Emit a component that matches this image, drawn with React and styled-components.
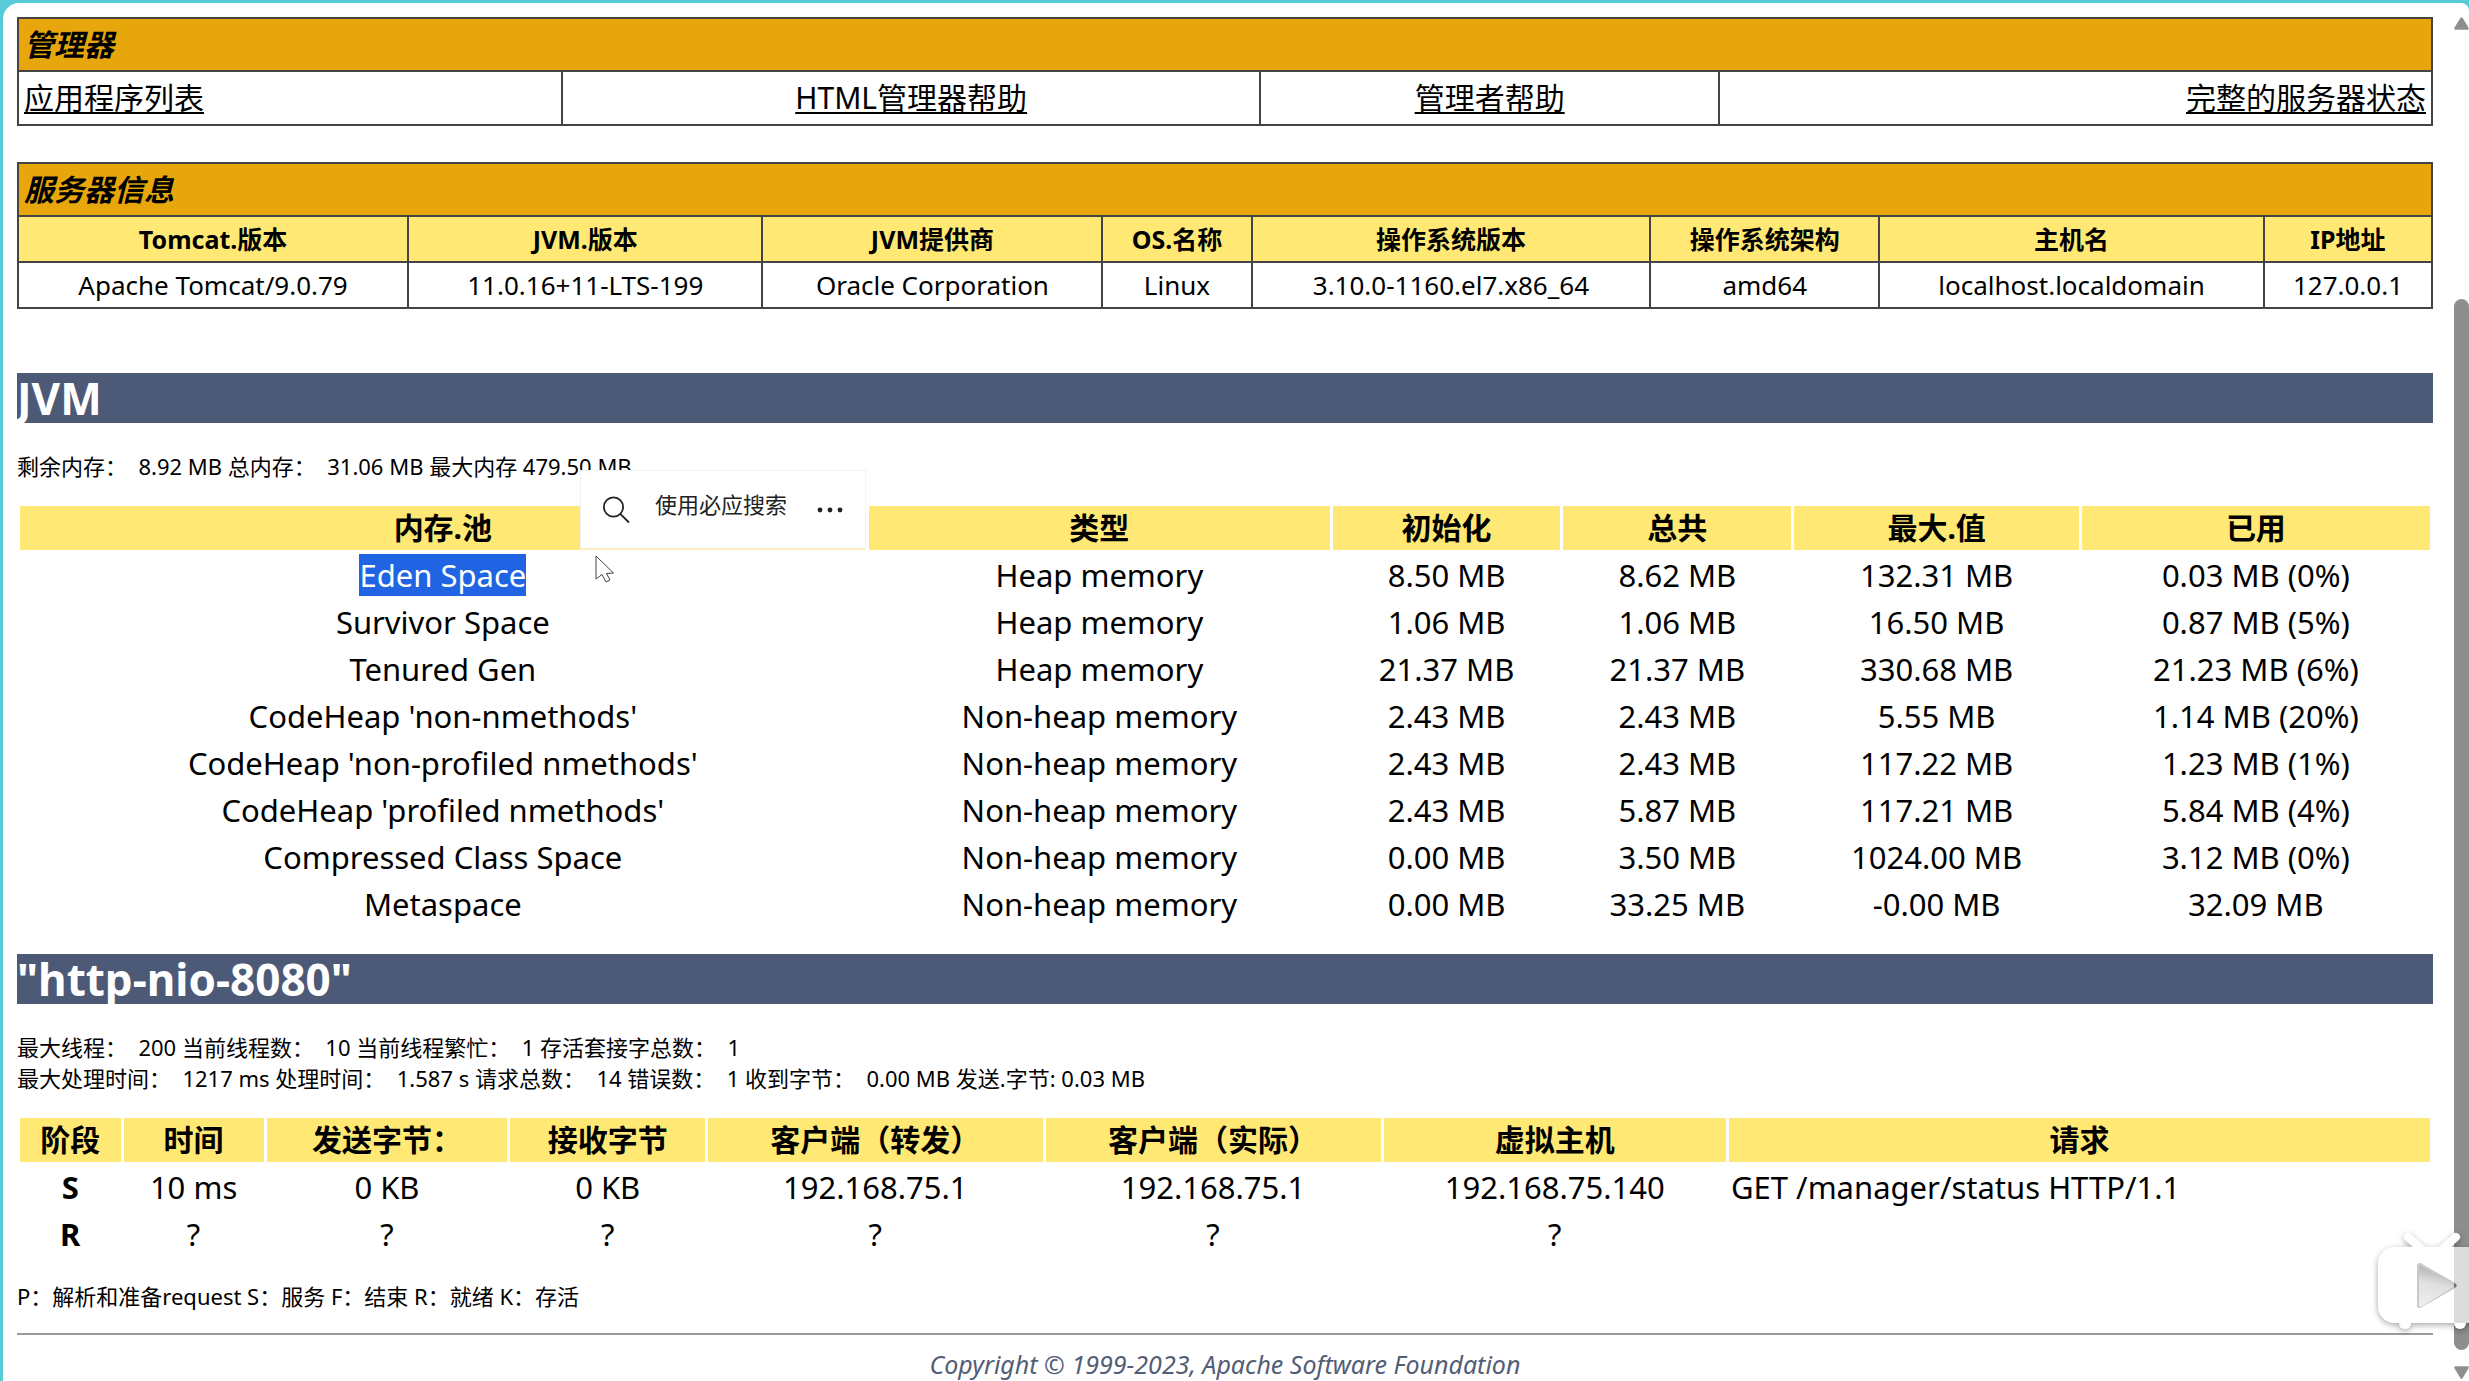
import React from 'react';
import styled, { createGlobalStyle } from 'styled-components'

const GlobalStyle = createGlobalStyle`
  * {
    box-sizing: border-box;
  }
  body {
    margin: 0;
    background: #58cbd9;
    color: #000;
    font-family: "Noto Sans", "Noto Sans CJK SC", sans-serif;
  }
`;

const Frame = styled.div`
    position: relative;
    display: flex;
    min-height: 100vh;
    border-top: 3px solid #58cbd9;
    border-left: 3px solid #58cbd9;
    overflow: hidden;
`;

const Page = styled.main`
    flex: 1;
    min-width: 0;
    background: white;
    border-top-left-radius: 16px;
    padding: 14px 21px 0 14px;
`;

const BoxTable = styled.table`
    width: 100%;
    table-layout: fixed;
    border-collapse: collapse;
    margin-bottom: ${props => props.$gap}px;
    th, td {
      border: 2px solid #444;
      padding: 0 5px;
    }
`;

const Col = styled.col`
    width: ${props => props.$w}%;
`;

const TitleCell = styled.th`
    height: 53px;
    background: #e7a70c;
    font-size: 30px;
    line-height: 40px;
    font-style: italic;
    text-align: left;
`;

const LinkCell = styled.td`
    height: 54px;
    font-size: 30px;
    line-height: 40px;
    text-align: ${props => props.$align || 'center'};
`;

const PageLink = styled.a`
    color: black;
    text-decoration: underline;
    text-decoration-thickness: 2px;
    text-underline-offset: 3px;
`;

const InfoHead = styled.th`
    height: 46px;
    background: #ffe974;
    font-size: 25px;
    line-height: 36px;
`;

const InfoCell = styled.td`
    height: 46px;
    font-size: 26px;
    line-height: 36px;
    text-align: center;
`;

const Banner = styled.h1`
    margin: 0 0 28px;
    background: #4c5a77;
    color: white;
    font-size: 44px;
    line-height: 50px;
    font-weight: bold;
`;

const Info = styled.p`
    margin: 0;
    font-size: 22px;
    line-height: 31px;
    white-space: pre-wrap;
`;

const DataTable = styled.table`
    width: 100%;
    table-layout: fixed;
    border-collapse: separate;
    border-spacing: 3px;
    margin: 21px 0 ${props => props.$gap}px;
    font-size: 31px;
    line-height: 40px;
    th, td {
      height: 44px;
      padding: 0 2px;
      text-align: center;
      white-space: nowrap;
    }
    td:nth-child(8) {
      text-align: left;
    }
`;

const DataHead = styled.th`
    background: #ffe974;
    font-size: 30px;
`;

const Selected = styled.span`
    background: #2164e3;
    color: white;
`;

const PoolWrap = styled.div`
    position: relative;
`;

const Popup = styled.div`
    position: absolute;
    top: -33px;
    left: 563px;
    width: 286px;
    height: 80px;
    display: flex;
    align-items: center;
    gap: 30px;
    padding: 0 20px;
    background: white;
    border: 1px solid #f3f3f3;
    border-bottom: 2px solid #fdeec0;
`;

const PopupButton = styled.button`
    display: flex;
    align-items: center;
    gap: 24px;
    padding: 0;
    border: 0;
    background: none;
    color: #222;
    font-family: inherit;
    font-size: 22px;
    line-height: 30px;
    white-space: nowrap;
`;

const PopupLabel = styled.span`
    padding-bottom: 12px;
`;

const Pointer = styled.svg`
    position: absolute;
    top: 52px;
    left: 578px;
`;

const Rule = styled.hr`
    margin: 21px 0 15px;
    border: 0;
    border-top: 2px solid #999b9d;
`;

const Copyright = styled.footer`
    color: #525d76;
    font-size: 25px;
    line-height: 28px;
    font-style: italic;
    text-align: center;
`;

const ScrollBar = styled.div`
    display: flex;
    flex-direction: column;
    width: 15px;
    background: white;
    border-top-right-radius: 8px;
    padding: 14px 0 2px;
`;

const Thumb = styled.div`
    flex: 1;
    margin: 269px 0 16px;
    border-radius: 8px;
    background: #8d8f8d;
`;

const PlayerBadge = styled.svg`
    position: absolute;
    right: 0;
    bottom: 46px;
`;

const POOL_HEADS = ['内存.池', '类型', '初始化', '总共', '最大.值', '已用'];
const POOLS = [
    ['Eden Space', 'Heap memory', '8.50 MB', '8.62 MB', '132.31 MB', '0.03 MB (0%)'],
    ['Survivor Space', 'Heap memory', '1.06 MB', '1.06 MB', '16.50 MB', '0.87 MB (5%)'],
    ['Tenured Gen', 'Heap memory', '21.37 MB', '21.37 MB', '330.68 MB', '21.23 MB (6%)'],
    ["CodeHeap 'non-nmethods'", 'Non-heap memory', '2.43 MB', '2.43 MB', '5.55 MB', '1.14 MB (20%)'],
    ["CodeHeap 'non-profiled nmethods'", 'Non-heap memory', '2.43 MB', '2.43 MB', '117.22 MB', '1.23 MB (1%)'],
    ["CodeHeap 'profiled nmethods'", 'Non-heap memory', '2.43 MB', '5.87 MB', '117.21 MB', '5.84 MB (4%)'],
    ['Compressed Class Space', 'Non-heap memory', '0.00 MB', '3.50 MB', '1024.00 MB', '3.12 MB (0%)'],
    ['Metaspace', 'Non-heap memory', '0.00 MB', '33.25 MB', '-0.00 MB', '32.09 MB'],
];

const SERVER = [
    ['Tomcat.版本', 'Apache Tomcat/9.0.79'],
    ['JVM.版本', '11.0.16+11-LTS-199'],
    ['JVM提供商', 'Oracle Corporation'],
    ['OS.名称', 'Linux'],
    ['操作系统版本', '3.10.0-1160.el7.x86_64'],
    ['操作系统架构', 'amd64'],
    ['主机名', 'localhost.localdomain'],
    ['IP地址', '127.0.0.1'],
];

const REQUEST_HEADS = ['阶段', '时间', '发送字节：', '接收字节', '客户端（转发）', '客户端（实际）', '虚拟主机', '请求'];
const REQUESTS = [
    ['S', '10 ms', '0 KB', '0 KB', '192.168.75.1', '192.168.75.1', '192.168.75.140', 'GET /manager/status HTTP/1.1'],
    ['R', '?', '?', '?', '?', '?', '?', ''],
];

// column widths, in percent of the table
const MANAGER_COLS = [22.54, 28.92, 19.01, 29.53];
const SERVER_COLS = [16.16, 14.68, 14.08, 6.18, 16.52, 9.48, 15.94, 6.96];
const POOL_COLS = [35.31, 19.26, 9.49, 9.53, 11.87, 14.54];
const REQUEST_COLS = [4.21, 5.86, 10.08, 8.15, 14, 14.03, 14.33, 29.34];

const Cols = ({ widths }) => (
    <colgroup>
        {widths.map((w, i) => <Col key={i} $w={w} />)}
    </colgroup>
);

const ManagerTable = () => (
    <BoxTable $gap={36}>
        <Cols widths={MANAGER_COLS} />
        <tbody>
            <tr><TitleCell colSpan={4}>管理器</TitleCell></tr>
            <tr>
                <LinkCell $align="left"><PageLink href="#list">应用程序列表</PageLink></LinkCell>
                <LinkCell><PageLink href="#html-help">HTML管理器帮助</PageLink></LinkCell>
                <LinkCell><PageLink href="#help">管理者帮助</PageLink></LinkCell>
                <LinkCell $align="right"><PageLink href="#status">完整的服务器状态</PageLink></LinkCell>
            </tr>
        </tbody>
    </BoxTable>
);

const ServerTable = () => (
    <BoxTable $gap={64}>
        <Cols widths={SERVER_COLS} />
        <tbody>
            <tr><TitleCell colSpan={8}>服务器信息</TitleCell></tr>
            <tr>{SERVER.map(([name]) => <InfoHead key={name}>{name}</InfoHead>)}</tr>
            <tr>{SERVER.map(([name, value]) => <InfoCell key={name}>{value}</InfoCell>)}</tr>
        </tbody>
    </BoxTable>
);

const SearchPopup = () => (
    <Popup>
        <PopupButton type="button">
            <svg width="30" height="30" viewBox="0 0 30 30" fill="none" stroke="#222" strokeWidth="1.8">
                <circle cx="12.500" cy="12" r="9.600" />
                <path d="M19.300 18.800L28 27.500" />
            </svg>
            <PopupLabel>使用必应搜索</PopupLabel>
        </PopupButton>
        <PopupButton type="button" aria-label="more">
            <svg width="26" height="6" viewBox="0 0 26 6" fill="#222">
                <circle cx="3" cy="3" r="2.4" />
                <circle cx="13" cy="3" r="2.4" />
                <circle cx="23" cy="3" r="2.4" />
            </svg>
        </PopupButton>
    </Popup>
);

const PoolTable = () => (
    <DataTable $gap={25}>
        <Cols widths={POOL_COLS} />
        <thead>
            <tr>{POOL_HEADS.map(h => <DataHead key={h}>{h}</DataHead>)}</tr>
        </thead>
        <tbody>
            {POOLS.map((row, r) => (
                <tr key={row[0]}>
                    {row.map((cell, c) => (
                        <td key={c}>{r === 0 && c === 0 ? <Selected>{cell}</Selected> : cell}</td>
                    ))}
                </tr>
            ))}
        </tbody>
    </DataTable>
);

const RequestTable = () => (
    <DataTable $gap={22}>
        <Cols widths={REQUEST_COLS} />
        <thead>
            <tr>{REQUEST_HEADS.map(h => <DataHead key={h}>{h}</DataHead>)}</tr>
        </thead>
        <tbody>
            {REQUESTS.map(row => (
                <tr key={row[0]}>
                    {row.map((cell, c) => <td key={c}>{c === 0 ? <strong>{cell}</strong> : cell}</td>)}
                </tr>
            ))}
        </tbody>
    </DataTable>
);

// little tv set with a play sign, half over the scroll bar
const Player = () => (
    <PlayerBadge width="100" height="110" viewBox="0 0 100 110">
        <defs>
            <linearGradient id="play" x1="0.300" y1="0" x2="0.100" y2="1">
                <stop offset="0" stopColor="#b4b4b4" />
                <stop offset="0.400" stopColor="#e0e0e0" />
                <stop offset="1" stopColor="#eeeeee" />
            </linearGradient>
            <filter id="shade" x="-20%" y="-20%" width="140%" height="140%">
                <feDropShadow dx="0" dy="2" stdDeviation="3" floodColor="#000" floodOpacity="0.350" />
            </filter>
            <clipPath id="bar">
                <rect x="85" y="0" width="15" height="110" />
            </clipPath>
        </defs>
        <g filter="url(#shade)">
            <path d="M39 12l18 16M87 12L69 28" stroke="white" strokeWidth="8" strokeLinecap="round" />
            <circle cx="36" cy="98" r="6" fill="white" />
            <circle cx="91" cy="98" r="6" fill="white" />
            <rect x="9" y="22" width="120" height="76" rx="17" fill="white" />
        </g>
        <rect x="9" y="22" width="120" height="76" rx="17" fill="#dcdcdc" clipPath="url(#bar)" />
        <path d="M50.500 40.500v40L85.500 60.500z" fill="#c8c8c8" stroke="#c8c8c8" strokeWidth="5" strokeLinejoin="round" />
        <path d="M51.500 42.500v38L84 60.500z" fill="url(#play)" stroke="url(#play)" strokeWidth="3" strokeLinejoin="round" />
        <path d="M50.500 40.500v40L85.500 60.500z" fill="none" stroke="#6d6d6d" strokeWidth="4" strokeLinejoin="round" clipPath="url(#bar)" />
    </PlayerBadge>
);

const App = () => {
    return (
        <Frame>
            <GlobalStyle />
            <Page>
                <ManagerTable />
                <ServerTable />
                <Banner>JVM</Banner>
                <Info>{'剩余内存：  8.92 MB 总内存：  31.06 MB 最大内存 479.50 MB'}</Info>
                <PoolWrap>
                    <PoolTable />
                    <SearchPopup />
                    <Pointer width="20" height="30" viewBox="0 0 20 30">
                        <path d="M1 1v23l6-4.500 4 7.500 4-2-3.500-6.500 7-0.500z" fill="white" stroke="#444" strokeWidth="1" />
                    </Pointer>
                </PoolWrap>
                <Banner>"http-nio-8080"</Banner>
                <Info>
                    {'最大线程：  200 当前线程数：  10 当前线程繁忙：  1 存活套接字总数：  1'}<br />
                    {'最大处理时间：  1217 ms 处理时间：  1.587 s 请求总数：  14 错误数：  1 收到字节：  0.00 MB 发送.字节: 0.03 MB'}
                </Info>
                <RequestTable />
                <Info>P：解析和准备request S：服务 F：结束 R：就绪 K：存活</Info>
                <Rule />
                <Copyright>Copyright © 1999-2023, Apache Software Foundation</Copyright>
            </Page>
            <ScrollBar>
                <svg width="15" height="13" viewBox="0 0 15 13">
                    <path d="M7.500 1.500L13.500 11.500h-12z" fill="#8d8f8d" stroke="#8d8f8d" strokeWidth="2.500" strokeLinejoin="round" />
                </svg>
                <Thumb />
                <svg width="15" height="13" viewBox="0 0 15 13">
                    <path d="M1.500 1.500h12L7.500 11.500z" fill="#8d8f8d" stroke="#8d8f8d" strokeWidth="2.500" strokeLinejoin="round" />
                </svg>
            </ScrollBar>
            <Player />
        </Frame>
    )
}

export default App;
